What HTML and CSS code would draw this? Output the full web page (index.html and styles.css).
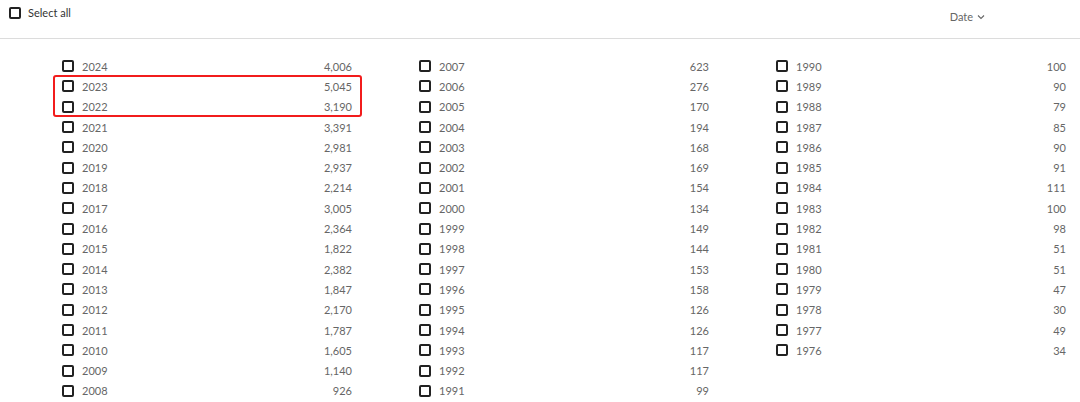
FILE: index.html
```html
<!DOCTYPE html>
<html lang="en">

<head>
  <meta charset="UTF-8">
  <title>Date filter</title>
  <link rel="stylesheet" href="styles.css">
</head>

<body>
  <div class="toolbar">
    <label class="select-all"><span class="box"></span>Select all</label>
    <div class="sort">Date
      <svg width="8" height="6" viewBox="0 0 8 6"><path d="M1 1.5 L4 4.5 L7 1.5" fill="none" stroke="#666" stroke-width="1.1"/></svg>
    </div>
  </div>

  <div class="years">
    <div class="col">
      <div class="highlight"></div>
      <div class="row"><span class="box"></span><span class="year">2024</span><span class="count">4,006</span></div>
      <div class="row"><span class="box"></span><span class="year">2023</span><span class="count">5,045</span></div>
      <div class="row"><span class="box"></span><span class="year">2022</span><span class="count">3,190</span></div>
      <div class="row"><span class="box"></span><span class="year">2021</span><span class="count">3,391</span></div>
      <div class="row"><span class="box"></span><span class="year">2020</span><span class="count">2,981</span></div>
      <div class="row"><span class="box"></span><span class="year">2019</span><span class="count">2,937</span></div>
      <div class="row"><span class="box"></span><span class="year">2018</span><span class="count">2,214</span></div>
      <div class="row"><span class="box"></span><span class="year">2017</span><span class="count">3,005</span></div>
      <div class="row"><span class="box"></span><span class="year">2016</span><span class="count">2,364</span></div>
      <div class="row"><span class="box"></span><span class="year">2015</span><span class="count">1,822</span></div>
      <div class="row"><span class="box"></span><span class="year">2014</span><span class="count">2,382</span></div>
      <div class="row"><span class="box"></span><span class="year">2013</span><span class="count">1,847</span></div>
      <div class="row"><span class="box"></span><span class="year">2012</span><span class="count">2,170</span></div>
      <div class="row"><span class="box"></span><span class="year">2011</span><span class="count">1,787</span></div>
      <div class="row"><span class="box"></span><span class="year">2010</span><span class="count">1,605</span></div>
      <div class="row"><span class="box"></span><span class="year">2009</span><span class="count">1,140</span></div>
      <div class="row"><span class="box"></span><span class="year">2008</span><span class="count">926</span></div>
    </div>
    <div class="col">
      <div class="row"><span class="box"></span><span class="year">2007</span><span class="count">623</span></div>
      <div class="row"><span class="box"></span><span class="year">2006</span><span class="count">276</span></div>
      <div class="row"><span class="box"></span><span class="year">2005</span><span class="count">170</span></div>
      <div class="row"><span class="box"></span><span class="year">2004</span><span class="count">194</span></div>
      <div class="row"><span class="box"></span><span class="year">2003</span><span class="count">168</span></div>
      <div class="row"><span class="box"></span><span class="year">2002</span><span class="count">169</span></div>
      <div class="row"><span class="box"></span><span class="year">2001</span><span class="count">154</span></div>
      <div class="row"><span class="box"></span><span class="year">2000</span><span class="count">134</span></div>
      <div class="row"><span class="box"></span><span class="year">1999</span><span class="count">149</span></div>
      <div class="row"><span class="box"></span><span class="year">1998</span><span class="count">144</span></div>
      <div class="row"><span class="box"></span><span class="year">1997</span><span class="count">153</span></div>
      <div class="row"><span class="box"></span><span class="year">1996</span><span class="count">158</span></div>
      <div class="row"><span class="box"></span><span class="year">1995</span><span class="count">126</span></div>
      <div class="row"><span class="box"></span><span class="year">1994</span><span class="count">126</span></div>
      <div class="row"><span class="box"></span><span class="year">1993</span><span class="count">117</span></div>
      <div class="row"><span class="box"></span><span class="year">1992</span><span class="count">117</span></div>
      <div class="row"><span class="box"></span><span class="year">1991</span><span class="count">99</span></div>
    </div>
    <div class="col">
      <div class="row"><span class="box"></span><span class="year">1990</span><span class="count">100</span></div>
      <div class="row"><span class="box"></span><span class="year">1989</span><span class="count">90</span></div>
      <div class="row"><span class="box"></span><span class="year">1988</span><span class="count">79</span></div>
      <div class="row"><span class="box"></span><span class="year">1987</span><span class="count">85</span></div>
      <div class="row"><span class="box"></span><span class="year">1986</span><span class="count">90</span></div>
      <div class="row"><span class="box"></span><span class="year">1985</span><span class="count">91</span></div>
      <div class="row"><span class="box"></span><span class="year">1984</span><span class="count">111</span></div>
      <div class="row"><span class="box"></span><span class="year">1983</span><span class="count">100</span></div>
      <div class="row"><span class="box"></span><span class="year">1982</span><span class="count">98</span></div>
      <div class="row"><span class="box"></span><span class="year">1981</span><span class="count">51</span></div>
      <div class="row"><span class="box"></span><span class="year">1980</span><span class="count">51</span></div>
      <div class="row"><span class="box"></span><span class="year">1979</span><span class="count">47</span></div>
      <div class="row"><span class="box"></span><span class="year">1978</span><span class="count">30</span></div>
      <div class="row"><span class="box"></span><span class="year">1977</span><span class="count">49</span></div>
      <div class="row"><span class="box"></span><span class="year">1976</span><span class="count">34</span></div>
    </div>
  </div>
</body>

</html>
```

FILE: styles.css
```css
body {
  margin: 0;
  background-color: #fff;
  font-family: Lato, "Open Sans", sans-serif;
  font-size: 11px;
  color: #666;
}

.toolbar {
  display: flex;
  justify-content: space-between;
  align-items: flex-start;
  height: 38px;
  border-bottom: 1px solid #dcdcdc;
  padding: 0 95px 0 9px;
}

.select-all {
  display: flex;
  align-items: center;
  gap: 7px;
  margin-top: 6px;
  color: #333;
}

.sort {
  display: flex;
  align-items: center;
  gap: 4px;
  margin-top: 10px;
}

.box {
  display: inline-block;
  width: 8px;
  height: 8px;
  border: 2px solid #222;
  border-radius: 2px;
  flex-shrink: 0;
}

.years {
  display: grid;
  grid-template-columns: repeat(3, 290px);
  column-gap: 67px;
  padding: 17px 0 0 62px;
}

.col {
  position: relative;
  display: flex;
  flex-direction: column;
}

.row {
  display: flex;
  align-items: center;
  height: 20.3px;
}

.row .box {
  margin-right: 8px;
}

.year {
  flex: 1;
}

.count {
  text-align: right;
}

.highlight {
  position: absolute;
  left: -9px;
  right: -10px;
  top: 19px;
  height: 38px;
  border: 2px solid #f21c1c;
  border-radius: 3px;
}
```
